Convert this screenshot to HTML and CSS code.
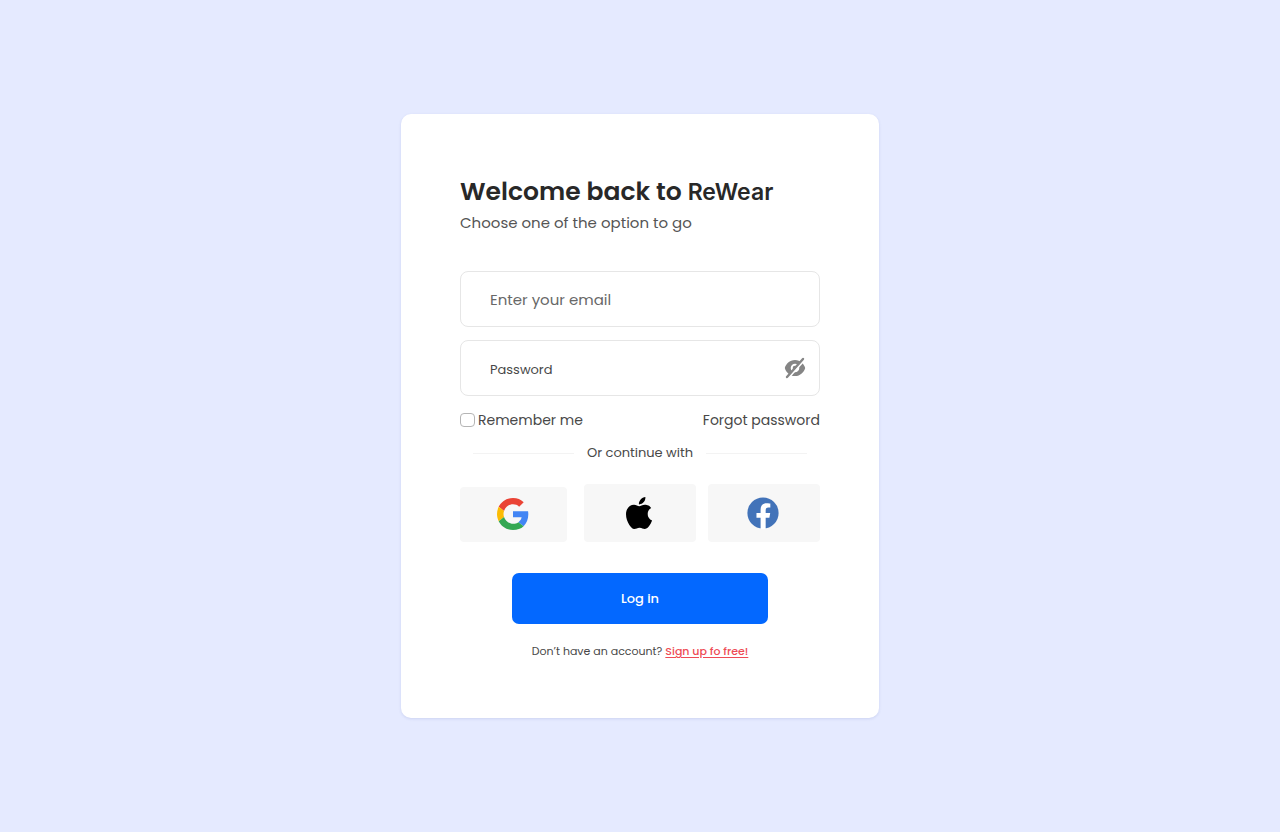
FILE: index.html
```html
<!DOCTYPE html>
<html lang="en">
<head>
<meta charset="utf-8">
<meta name="viewport" content="width=device-width, initial-scale=1">
<title>ReWear – Log in</title>
<link rel="stylesheet" href="styles.css">
</head>
<body>
<main class="card">
  <h1 class="title">Welcome back to <span class="brand">ReWear</span></h1>
  <p class="subtitle">Choose one of the option to go</p>
  <form class="form">
    <div class="field">
      <input class="input input-email" type="email" placeholder="Enter your email" aria-label="Email">
    </div>
    <div class="field">
      <input class="input input-password" type="password" placeholder="Password" aria-label="Password">
      <button class="toggle" type="button" aria-label="Show password">
        <svg width="22" height="22" viewBox="0 0 22 22" aria-hidden="true">
          <path fill="#858585" fill-rule="evenodd" d="M11 2.900C5.600 2.900 1.800 7 .8 11c1 4 4.800 8.100 10.200 8.100S20.200 15 21.200 11C20.200 7 16.400 2.900 11 2.900zM11 6.700a4.300 4.300 0 1 1 0 8.600a4.300 4.300 0 0 1 0-8.600z"/>
          <circle cx="11" cy="11" r="2.300" fill="#858585"/>
          <path d="M4.300 21L21 2.300" stroke="#fff" stroke-width="2"/>
          <path d="M3 20L19 2" stroke="#858585" stroke-width="2.400" stroke-linecap="round"/>
        </svg>
      </button>
    </div>
    <div class="options">
      <label class="remember"><input class="check" type="checkbox">Remember me</label>
      <a class="forgot" href="#">Forgot password</a>
    </div>
    <div class="divider"><span>Or continue with</span></div>
    <div class="socials">
      <button class="social social-google" type="button" aria-label="Continue with Google">
        <svg width="32" height="32" viewBox="0 0 48 48" aria-hidden="true">
          <path fill="#EA4335" d="M24 9.500c3.540 0 6.710 1.220 9.210 3.600l6.850-6.850C35.900 2.380 30.470 0 24 0 14.620 0 6.510 5.380 2.560 13.220l7.980 6.190C12.430 13.720 17.740 9.500 24 9.500z"/>
          <path fill="#4285F4" d="M46.980 24.550c0-1.570-.15-3.090-.38-4.550H24v9.020h12.940c-.58 2.960-2.260 5.480-4.780 7.180l7.730 6c4.510-4.180 7.090-10.360 7.090-17.650z"/>
          <path fill="#FBBC05" d="M10.530 28.590c-.48-1.450-.76-2.990-.76-4.590s.27-3.140.76-4.590l-7.980-6.190C.92 16.460 0 20.120 0 24c0 3.880.92 7.540 2.560 10.780l7.970-6.190z"/>
          <path fill="#34A853" d="M24 48c6.480 0 11.930-2.130 15.890-5.810l-7.730-6c-2.150 1.450-4.920 2.300-8.160 2.300-6.260 0-11.570-4.220-13.470-9.910l-7.980 6.190C6.510 42.620 14.620 48 24 48z"/>
        </svg>
      </button>
      <button class="social" type="button" aria-label="Continue with Apple">
        <svg width="26" height="32" viewBox="0 0 814 1000" aria-hidden="true">
          <path d="M788.100 340.900c-5.800 4.500-108.200 62.200-108.200 190.500 0 148.400 130.300 200.900 134.200 202.200-.6 3.200-20.700 71.900-68.700 141.900-42.800 61.600-87.500 123.100-155.500 123.100s-85.500-39.500-164-39.500c-76.500 0-103.700 40.800-165.900 40.800s-105.600-57-155.500-127C46.700 790.700 0 663 0 541.800c0-194.400 126.400-297.500 250.800-297.500 66.100 0 121.200 43.400 162.700 43.400 39.500 0 101.100-46 176.300-46 28.500 0 130.900 2.600 198.300 99.200zM554.100 159.400c31.100-36.900 53.100-88.100 53.100-139.300 0-7.100-.6-14.300-1.900-20.100-50.600 1.900-110.800 33.700-147.100 75.800-28.500 32.400-55.100 83.600-55.100 135.500 0 7.800 1.300 15.600 1.900 18.100 3.200.6 8.400 1.300 13.600 1.300 45.400 0 102.500-30.400 135.500-71.300z"/>
        </svg>
      </button>
      <button class="social" type="button" aria-label="Continue with Facebook">
        <svg width="32" height="32" viewBox="0 0 24 24" aria-hidden="true">
          <circle cx="12" cy="12" r="11.700" fill="#4273b9"/>
          <path fill="#fff" d="M10.200 24v-8.500H7.100V12h3.100V9.400c0-3 1.800-4.700 4.600-4.700 1.300 0 2.700.2 2.700.2v3H16c-1.500 0-2 .9-2 1.900V12h3.400l-.6 3.500H14V24z"/>
        </svg>
      </button>
    </div>
    <button class="submit" type="submit">Log in</button>
  </form>
  <p class="signup">Don’t have an account? <a class="signup-link" href="#">Sign up fo free!</a></p>
</main>
</body>
</html>
```
FILE: styles.css
```css
* {
  box-sizing: border-box;
}

body {
  margin: 0;
  min-height: 100vh;
  display: flex;
  align-items: center;
  justify-content: center;
  background: #e5eaff;
  color: #484848;
  font-family: Poppins, Inter, "Open Sans", sans-serif;
  font-size: 13px;
  line-height: 20px;
}

button,
input {
  font: inherit;
}

.card {
  width: 100%;
  max-width: 478px;
  padding: 60px 59px 57px;
  background: #fff;
  border-radius: 10px;
  box-shadow: 0 1px 3px rgba(60, 80, 160, 0.14);
}

.title {
  margin: 0;
  font-size: 25px;
  line-height: 36px;
  font-weight: 600;
  color: #282828;
}

.brand {
  font-family: Inter, sans-serif;
  font-size: 23px;
  line-height: 20px;
}

.subtitle {
  margin: 0 0 35px;
  font-size: 15px;
  line-height: 26px;
  color: #555;
}

.form {
  display: flex;
  flex-direction: column;
}

.field {
  display: flex;
  align-items: center;
  height: 56px;
  margin-bottom: 13px;
  padding: 0 13px 0 29px;
  border: 1px solid #e6e6e6;
  border-radius: 8px;
}

.input {
  flex: 1;
  min-width: 0;
  padding: 3px 0 0;
  border: 0;
  outline: 0;
  background: none;
  color: #484848;
}

.input-email {
  padding-top: 2px;
  font-size: 15px;
}

.input::placeholder {
  color: #484848;
  opacity: 1;
}

.input-email::placeholder {
  color: #686868;
}

.toggle {
  display: flex;
  padding: 0;
  border: 0;
  background: none;
}

.options {
  display: flex;
  justify-content: space-between;
  align-items: center;
  margin: 1px 0 13px;
  font-size: 14px;
}

.remember {
  display: flex;
  align-items: center;
  gap: 3px;
}

.check {
  appearance: none;
  width: 15px;
  height: 14px;
  margin: 0;
  border: 1px solid #b5b5b5;
  border-radius: 4px;
  background: #fff;
}

.check:checked {
  background: #0368ff;
}

.forgot {
  color: inherit;
  text-decoration: none;
}

.divider {
  display: flex;
  align-items: center;
  gap: 13px;
  margin: 0 13px 21px;
}

.divider::before,
.divider::after {
  content: "";
  flex: 1;
  height: 1px;
  background: #f3f3f3;
}

.socials {
  display: grid;
  grid-template-columns: repeat(3, 1fr);
  gap: 12px;
  height: 58px;
  margin-bottom: 31px;
}

.social {
  display: flex;
  align-items: center;
  justify-content: center;
  padding: 0 2px 0 0;
  border: 0;
  border-radius: 4px;
  background: #f7f7f7;
}

.social-google {
  margin: 3px 5px 0 0;
  padding-bottom: 2px;
}

.submit {
  align-self: center;
  width: 71%;
  height: 51px;
  border: 0;
  border-radius: 7px;
  background: #0368ff;
  color: #fff;
  font-weight: 500;
}

.signup {
  margin: 17px 0 0;
  font-size: 11px;
  text-align: center;
}

.signup-link {
  color: #ee4b55;
  font-weight: 500;
  text-underline-offset: 2px;
}
```
